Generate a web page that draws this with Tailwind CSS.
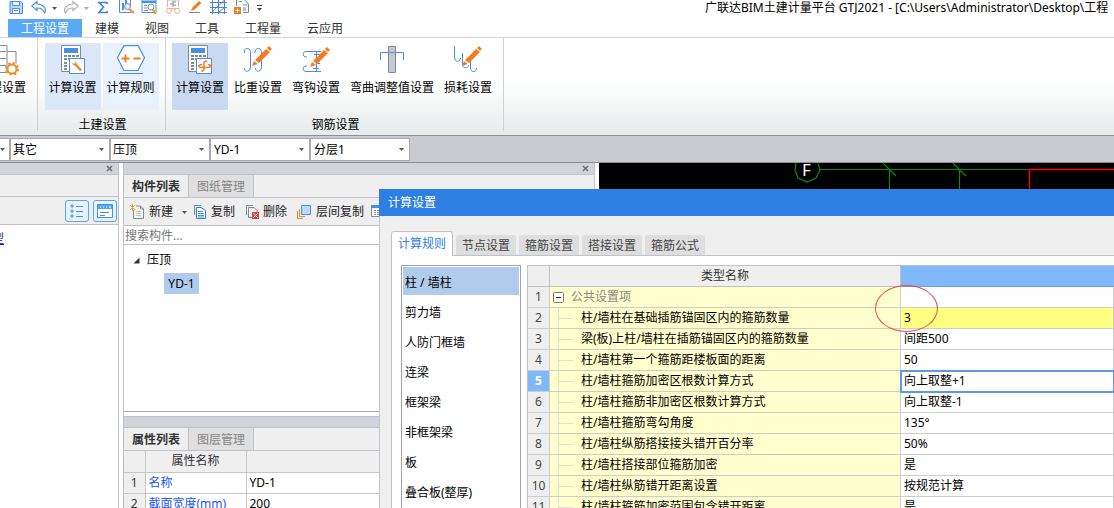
<!DOCTYPE html>
<html lang="zh-CN">
<head>
<meta charset="utf-8">
<title>广联达BIM土建计量平台 GTJ2021</title>
<script src="https://cdn.jsdelivr.net/npm/@tailwindcss/browser@4"></script>
</head>
<body class="relative flex h-screen flex-col overflow-hidden bg-white font-['Noto_Sans','Noto_Sans_CJK_SC',sans-serif] text-xs text-black">

<svg class="hidden" aria-hidden="true">
  <symbol id="calc" viewBox="0 0 24 30">
    <path d="M.5 .5h19v26H.5z" fill="#fff" stroke="#7d8c96"/>
    <path d="M3 3h14v5H3z" fill="#4a90e2"/>
    <path d="M3 10h3v2H3zM7 10h3v2H7zM11 10h3v2h-3zM15 10h3v2h-3zM3 13h3v2H3zM7 13h3v2H7zM3 17h3v2H3zM3 20h3v2H3zM3 23h3v2H3z" fill="#7d8c96"/>
  </symbol>
  <symbol id="pencil" viewBox="0 0 22 22">
    <path d="M4 15 15 4l4 3L8 18zM16 3l2-2 3 3-2 2zM3 16l4 3-6 2z" fill="#f47c20"/>
  </symbol>
  <symbol id="caret" viewBox="0 0 5 3"><path d="M0 0h5L2.500 3z" fill="currentColor"/></symbol>
  <symbol id="close" viewBox="0 0 7 7"><path d="M1 1l5 5M6 1 1 6" stroke="#6f6f74" stroke-width="1.600"/></symbol>
</svg>

<header class="flex h-[15px] shrink-0 justify-between">
  <nav aria-label="快速访问" class="flex pl-[9px]">
    <button aria-label="保存" class="w-[22px]"><svg width="15" height="15" viewBox="0 0 15 15"><path d="M1 1.500h11l1.500 1.500v10.500H1z" fill="#b9d8fa" stroke="#4a90e2"/><path d="M3.500 1.500h7v4h-7zM3.500 8.500h7v5h-7z" fill="#fff" stroke="#4a90e2"/><path d="M5 10.500h4" stroke="#4a90e2"/></svg></button>
    <button aria-label="撤销" class="w-[21px]"><svg width="16" height="15" viewBox="0 0 16 15"><path d="M.8 6 6 1.500V4c5 0 8.500 3 8.500 6.500 0 1-.5 2-1 2.500-1-3-3-5-7.500-5v2.500z" fill="#fff" stroke="#4a90e2" stroke-width="1.200"/></svg></button>
    <button aria-label="撤销列表" class="w-[11px] text-[#555]"><svg class="mt-px" width="5" height="3"><use href="#caret"/></svg></button>
    <button aria-label="恢复" class="w-[21px]"><svg width="16" height="15" viewBox="0 0 16 15"><path d="M15.200 6 10 1.500V4C5 4 1.500 7 1.500 10.500c0 1 .5 2 1 2.500 1-3 3-5 7.500-5v2.500z" fill="#fff" stroke="#b0b0b0" stroke-width="1.200"/></svg></button>
    <button aria-label="恢复列表" class="w-[13px] text-[#aaa]"><svg class="mt-px" width="5" height="3"><use href="#caret"/></svg></button>
    <button aria-label="汇总计算" class="w-[21px]"><svg width="12" height="15" viewBox="0 0 12 15"><path d="M10 4V2.500H2L6.500 7 2 12.500h8V11" fill="none" stroke="#3e83d6" stroke-width="1.600"/></svg></button>
    <button aria-label="查看计算式" class="w-[23px]"><svg width="17" height="15" viewBox="0 0 17 15"><path d="M1.500 0v12.500h14M12.500 0v7" fill="none" stroke="#4a90e2"/><path d="M4 3h2v7H4zM7 0h2v5H7z" fill="#4a90e2"/><circle cx="9.500" cy="6.500" r="3" fill="#d9ebff" stroke="#7d8c96"/><path d="m11 9 5 4" stroke="#f2995c" stroke-width="2.500"/></svg></button>
    <button aria-label="查看工程量" class="w-6"><svg width="17" height="15" viewBox="0 0 17 15"><path d="M1 0h14v12.500H1z" fill="#fff" stroke="#4a90e2"/><path d="M1 1h14v2H1z" fill="#4a90e2"/><path d="M3 5.500h3M3 8h3M3 10.500h4" stroke="#7d8c96"/><circle cx="10" cy="7" r="3" fill="#fff" stroke="#7d8c96"/><path d="m12 10 3 4" stroke="#f0a030" stroke-width="2.500"/></svg></button>
    <button aria-label="查看钢筋量" class="w-[23px]"><svg width="16" height="15" viewBox="0 0 16 15"><path d="M2.500 7V0h11v7" fill="none" stroke="#b8c0c8"/><path d="M5 4h3M8 1v6M8 2h3M8 5h3" stroke="#7d8c96"/><path d="M1 8h14l-2 2h-3L8 9l-2 1H3z" fill="#f6b48a"/><circle cx="4" cy="11" r="2.500" fill="#fff" stroke="#f6b48a"/><circle cx="12" cy="11" r="2.500" fill="#fff" stroke="#f6b48a"/></svg></button>
    <button aria-label="绘图" class="w-[22px]"><svg width="15" height="15" viewBox="0 0 15 15"><path d="M4 8 11 1l2.500 2L6 10l-3 .5z" fill="#f47c20"/><path d="M1 12.500h11" stroke="#7d8c96"/></svg></button>
    <button aria-label="轴网" class="w-6"><svg width="17" height="15" viewBox="0 0 17 15"><path d="M2.500 0v14M8.500 0v14M14.500 0v14M0 2.500h17M0 7.500h17M0 12.500h17M1 13 14.500 0M8 13l7-6" fill="none" stroke="#4a83cc"/></svg></button>
    <button aria-label="添加图纸" class="w-[22px]"><svg width="16" height="15" viewBox="0 0 16 15"><path d="M2.500 6V0M5 1.500h3M9 12.500h5.500V4l-4-4" fill="none" stroke="#7d8c96"/><path d="M0 7h7v7H0z" fill="#f47c20"/><path d="M1.500 10.500h4M3.500 8.500v4" stroke="#fff"/><path d="M9 5h4M9 8h3M9 10h3" stroke="#4a90e2"/></svg></button>
    <button aria-label="自定义快速访问" class="w-[9px] text-[#444]"><svg width="7" height="15" viewBox="0 0 7 15"><path d="M1 5.500h5" stroke="currentColor"/><path d="M1 8h5L3.500 11z" fill="currentColor"/></svg></button>
  </nav>
  <h1 class="w-[409px] overflow-hidden leading-[15px] whitespace-nowrap">广联达BIM土建计量平台 GTJ2021 - [C:\Users\Administrator\Desktop\工程</h1>
</header>

<nav aria-label="功能区" class="flex h-[23px] shrink-0 border-b border-[#d5d5d5] pt-1 pl-2 leading-4 text-[#333]">
  <button class="bg-[#5aa9f8] px-[13px] pt-[2px] text-white">工程设置</button>
  <button class="px-[13px] pt-[2px]">建模</button>
  <button class="px-[13px] pt-[2px]">视图</button>
  <button class="px-[13px] pt-[2px]">工具</button>
  <button class="px-[13px] pt-[2px]">工程量</button>
  <button class="px-[13px] pt-[2px]">云应用</button>
</nav>

<section aria-label="工程设置" class="flex h-[98px] shrink-0 border-b border-[#8d9094] bg-linear-to-b from-white from-45% to-[#e7ebeb] pb-1 whitespace-nowrap">
  <div class="flex w-[38px] justify-end overflow-hidden border-r border-[#cfd1d3] pt-[5px] pr-[11px]">
    <button class="flex h-[67px] flex-col items-end pt-[2px]">
      <svg width="36" height="30" viewBox="0 0 36 30"><path d="M8 .5h9v27H8M8 6.500h8M8 13.500h8M8 20.500h8M17 6.500h9v12" fill="#fff" stroke="#7d8c96"/><circle cx="22" cy="24" r="4.500" fill="#fff" stroke="#ee9130" stroke-width="2"/><circle cx="22" cy="24" r="6" fill="none" stroke="#ee9130" stroke-width="2" stroke-dasharray="2.500 2.200"/></svg>
      <span class="mt-1 leading-[18px]">工程设置</span>
    </button>
  </div>
  <div class="flex w-32 flex-col items-center border-r border-[#cfd1d3] pt-[5px]">
    <div class="flex gap-[2px]">
      <button class="flex h-[67px] w-14 flex-col items-center bg-[#dce8f9] pt-[2px]">
        <svg width="24" height="30"><use href="#calc" width="24" height="30"/><path d="M8.500 13.500h15v15h-15z" fill="#fff" stroke="#4a90e2"/><path d="m14 19 6 6.500" stroke="#f0882e" stroke-width="2.500"/><path d="M11 17.500c0 2 2 3 3.500 2.500 1.500-1 1.500-3 0-4v2l-1.500 1z" fill="#f0882e"/></svg>
        <span class="mt-1 leading-[18px]">计算设置</span>
      </button>
      <button class="flex h-[67px] w-14 flex-col items-center bg-[#e9f1fc] pt-[2px]">
        <svg width="30" height="30" viewBox="0 0 30 30"><path d="M8 .7h14l6.500 12L22 25.500H8L1.500 12.700z" fill="#fff" stroke="#4a90e2" stroke-width="1.200"/><path d="M3 28.500h24" stroke="#4a90e2"/><path d="M5.500 13.500h8M9.500 9.500v8M17.500 13.500h7" stroke="#f47c20" stroke-width="1.800"/></svg>
        <span class="mt-1 leading-[18px]">计算规则</span>
      </button>
    </div>
    <h2 class="mt-[6px] pl-[2px] leading-[18px]">土建设置</h2>
  </div>
  <div class="flex flex-col items-center border-r border-[#cfd1d3] pt-[5px] pr-[7px] pl-[6px]">
    <div class="flex gap-[2px]">
      <button class="flex h-[67px] w-14 flex-col items-center bg-[#c9d9f0] pt-[2px]">
        <svg width="24" height="30"><use href="#calc" width="24" height="30"/><path d="M8.500 13.500h15v15h-15z" fill="#fff" stroke="#4a90e2"/><path d="M19 17c-1-1.500-3-1-3 1v6c0 2-1.500 2.500-3 1.500M14 19.500c-4 0-4 3-1 3h7c3 0 3-3 0-3" fill="none" stroke="#f47c20" stroke-width="1.500"/></svg>
        <span class="mt-1 leading-[18px]">计算设置</span>
      </button>
      <button class="flex h-[67px] w-14 flex-col items-center pt-[2px]">
        <svg width="30" height="30"><path d="M1.500 8C1 5 2 3.500 4.500 3.500S7.500 6 7.500 8v14c0 5-6 6-6 1M12 8c0-3 1-4.500 3.500-4.500S18.500 6 18.500 8v14c0 5-6 6-6 1" fill="none" stroke="#4a90e2"/><use href="#pencil" x="8" y="0" width="22" height="22"/></svg>
        <span class="mt-1 leading-[18px]">比重设置</span>
      </button>
      <button class="flex h-[67px] w-14 flex-col items-center pt-[2px]">
        <svg width="30" height="30"><path d="M20 6.500H5c-4 0-4 6 1 5.500M20 26.500H5c-4 0-4-6 1-5.500M15.500 6v21M13 9.500h6M12 23.500h6M15 18.500h4" fill="none" stroke="#4a90e2"/><use href="#pencil" x="8" y="1" width="22" height="22"/></svg>
        <span class="mt-1 leading-[18px]">弯钩设置</span>
      </button>
      <button class="flex h-[67px] w-[92px] flex-col items-center pt-[2px]">
        <svg width="26" height="30" viewBox="0 0 26 30"><path d="M9.500 1.500h7v26h-7z" fill="#c5c9cd" stroke="#7d8c96"/><path d="M1.500 15V7.500h23V15" fill="none" stroke="#4a90e2"/></svg>
        <span class="mt-1 leading-[18px]">弯曲调整值设置</span>
      </button>
      <button class="flex h-[67px] w-14 flex-col items-center pt-[2px]">
        <svg width="30" height="30"><path d="M1.500 1v11c0 6 6 5 6 1M9.500 8v11c0 5 6 5 6 1M17.500 15v7c0 6 6 6 6 1" fill="none" stroke="#4a90e2"/><use href="#pencil" x="8" y="0" width="22" height="22"/></svg>
        <span class="mt-1 leading-[18px]">损耗设置</span>
      </button>
    </div>
    <h2 class="mt-[6px] pl-[3px] leading-[18px]">钢筋设置</h2>
  </div>
</section>

<div class="flex h-[27px] shrink-0 border-b border-[#8b8b90] bg-[#c9cbd0] pt-[2px] pb-px">
  <label class="relative flex w-[10px] items-center border border-l-0 border-[#a9a9ac] bg-white text-[#555]"><select aria-label="楼层" class="size-full appearance-none"></select><svg class="pointer-events-none absolute right-1" width="5" height="3"><use href="#caret"/></svg></label>
  <label class="relative flex w-[100px] items-center border border-[#a9a9ac] bg-white text-[#555]"><select aria-label="构件类别" class="size-full appearance-none pl-[2px] text-black"><option>其它</option></select><svg class="pointer-events-none absolute right-[5px]" width="5" height="3"><use href="#caret"/></svg></label>
  <label class="relative flex w-[100px] items-center border border-[#a9a9ac] bg-white text-[#555]"><select aria-label="构件类型" class="size-full appearance-none pl-[2px] text-black"><option>压顶</option></select><svg class="pointer-events-none absolute right-[5px]" width="5" height="3"><use href="#caret"/></svg></label>
  <label class="relative flex w-[100px] items-center border border-[#a9a9ac] bg-white text-[#555]"><select aria-label="构件" class="size-full appearance-none pl-[3px] text-black"><option>YD-1</option></select><svg class="pointer-events-none absolute right-[5px]" width="5" height="3"><use href="#caret"/></svg></label>
  <label class="relative flex w-[100px] items-center border border-[#a9a9ac] bg-white text-[#555]"><select aria-label="分层" class="size-full appearance-none pl-[3px] text-black"><option>分层1</option></select><svg class="pointer-events-none absolute right-[5px]" width="5" height="3"><use href="#caret"/></svg></label>
</div>

<main class="flex min-h-0 flex-1">
  <aside class="flex w-[119px] shrink-0 flex-col border-r border-[#bfc2ca]">
    <div class="flex h-3 items-center justify-end border-b border-[#bfc2ca] bg-[#d3d4da] pr-[5px]"><button aria-label="关闭" class="flex"><svg width="7" height="7"><use href="#close"/></svg></button></div>
    <div class="h-[22px] border-b border-[#bfc2ca] bg-[#efefef]"></div>
    <div class="flex h-7 items-center justify-end gap-1 border-b border-[#bfc2ca] bg-[#efefef] pr-px">
      <button aria-label="列表视图" class="flex h-[22px] w-6 items-center justify-center rounded-[3px] border border-[#56a5f2] bg-[#e8f3ff]"><svg width="14" height="14" viewBox="0 0 14 14"><path d="M1 1h2v2H1zM1 6h2v2H1zM1 11h2v2H1z" fill="none" stroke="#4a90e2"/><path d="M6 2.500h7M6 7.500h7M6 12.500h7" stroke="#4a90e2"/></svg></button>
      <button aria-label="详情视图" class="flex h-[22px] w-6 items-center justify-center rounded-[3px] border border-[#56a5f2] bg-[#e8f3ff]"><svg width="16" height="14" viewBox="0 0 16 14"><path d="M.5 .5h15v13H.5z" fill="#fff" stroke="#4a90e2"/><path d="M1 1h14v4H1z" fill="#56a5f2"/><path d="M3 3h1M6 3h1M9 3h1M12 3h2" stroke="#fff"/><path d="M3 8.500h9M3 11.500h5" stroke="#4a90e2"/></svg></button>
    </div>
    <div class="flex flex-1"><div class="flex w-1 justify-end overflow-hidden pt-[6px] text-[#17178a]"><span class="underline">型</span></div></div>
  </aside>

  <section class="ml-1 flex w-[472px] shrink-0 flex-col border-r border-l border-[#bfc2ca]">
    <div class="flex h-3 shrink-0 items-center justify-end border-b border-[#bfc2ca] bg-[#d3d4da] pr-[5px]"><button aria-label="关闭" class="flex"><svg width="7" height="7"><use href="#close"/></svg></button></div>
    <div class="flex h-[23px] shrink-0 border-b border-[#bfc2ca] bg-[#efefef] leading-5">
      <button class="w-[65px] border-r border-[#bfc2ca] pt-[2px] font-bold text-[#333]">构件列表</button>
      <button class="w-[65px] border-r border-[#bfc2ca] bg-[#dfdfdf] pt-[2px] text-[#858585]">图纸管理</button>
    </div>
    <div class="flex h-7 shrink-0 items-center border-b border-[#bfc2ca] bg-[#efefef] pt-px pl-[6px] text-[#222]">
      <button class="flex w-[44px] shrink-0 items-center gap-1 whitespace-nowrap"><svg class="shrink-0" width="15" height="16" viewBox="0 0 15 16"><path d="M3.500 6v8.500h10V5l-3-3H6M10.500 2v3h3" fill="#f7f7f7" stroke="#7d8c96"/><path d="M6 7.500h5M6 9.500h5M6 11.500h5" stroke="#b8bec4"/><path d="m0 1 5 5M5 1 0 6M2.500 0v7" stroke="#f0a030"/></svg><span>新建</span></button>
      <button aria-label="新建选项" class="flex w-[19px] shrink-0 justify-center pl-px text-[#555]"><svg width="5" height="3"><use href="#caret"/></svg></button>
      <button class="flex w-[52px] shrink-0 items-center gap-1 whitespace-nowrap"><svg width="14" height="16" viewBox="0 0 14 16"><path d="M1.500 11V1.500H8" fill="none" stroke="#4a90e2"/><path d="M3.500 13V3.500H8l4.500 3v8h-9z" fill="#fff" stroke="#3b7dc8"/><path d="M5 7.500h5M5 9.500h6M5 11.500h6M5 13h6" stroke="#4a90e2"/></svg><span>复制</span></button>
      <button class="flex w-[52px] shrink-0 items-center gap-1 whitespace-nowrap"><svg width="14" height="16" viewBox="0 0 14 16"><path d="M1.500 11V1.500H8M7 13.500H3.500v-10H9l3 3V8" fill="none" stroke="#7d8c96"/><path d="M7 8h7v7H7z" fill="#d64545"/><path d="m8.500 9.500 4 4M12.500 9.500l-4 4" stroke="#fff"/></svg><span>删除</span></button>
      <button class="flex w-[74px] shrink-0 items-center gap-[5px] whitespace-nowrap"><svg width="14" height="16" viewBox="0 0 14 16"><path d="M4.500 1.500h9v9h-9z" fill="#b9d8fa" stroke="#4a90e2"/><path d="M2.500 5v7.500H8M.5 7v7.500H6" fill="none" stroke="#f0882e"/></svg><span>层间复制</span></button>
      <button aria-label="表格" class="flex"><svg width="12" height="14" viewBox="0 0 12 14"><path d="M.5 .5h12v11H.5z" fill="#fff" stroke="#7d8c96"/><path d="M0 0h12v3H0z" fill="#4a90e2"/><path d="M3 5.500h5M3 7.500h5M3 9.500h5" stroke="#7d8c96" stroke-dasharray="2 1"/></svg></button>
    </div>
    <input type="search" aria-label="搜索构件" placeholder="搜索构件..." class="h-[19px] shrink-0 border-b border-[#bfc2ca] bg-white pl-px placeholder:text-[#777]">
    <div role="tree" class="h-[167px] shrink-0 border-b border-[#a9a9b0] pt-[5px] leading-5">
      <div role="treeitem" class="flex items-center gap-[7px] pl-[9px]"><svg width="7" height="7" viewBox="0 0 7 7"><path d="M6.500 .5v6H.5z" fill="#333"/></svg>压顶</div>
      <div role="treeitem" class="mt-[3px] ml-10 h-[21px] w-[35px] bg-[#b1cbec] text-center leading-[21px]">YD-1</div>
    </div>
    <div class="mt-1 h-3 shrink-0 border-t border-b border-[#bfc2ca] bg-[#d3d4da]"></div>
    <div class="flex h-[23px] shrink-0 border-b border-[#bfc2ca] bg-[#efefef] leading-5">
      <button class="w-[65px] border-r border-[#bfc2ca] pt-[2px] font-bold text-[#333]">属性列表</button>
      <button class="w-[65px] border-r border-[#bfc2ca] bg-[#dfdfdf] pt-[2px] text-[#858585]">图层管理</button>
    </div>
    <table class="w-full table-fixed border-collapse leading-5 whitespace-nowrap">
      <colgroup><col class="w-[21px]"><col class="w-[101px]"><col></colgroup>
      <thead><tr class="h-[21px] bg-[#efefef] text-[#333]"><th class="border-r border-b border-[#c6c6c6] p-0"></th><th class="border-r border-b border-[#c6c6c6] p-0 font-normal">属性名称</th><th class="border-b border-[#c6c6c6] p-0 font-normal"></th></tr></thead>
      <tbody>
        <tr class="h-[21px]"><td class="border-r border-b border-[#c6c6c6] bg-[#efefef] p-0 text-center text-[#333]">1</td><td class="border-r border-b border-[#c6c6c6] p-0 pl-[3px] text-[#1a56ff]">名称</td><td class="border-b border-[#c6c6c6] p-0 pl-[3px]">YD-1</td></tr>
        <tr class="h-[21px]"><td class="border-r border-b border-[#c6c6c6] bg-[#efefef] p-0 text-center text-[#333]">2</td><td class="border-r border-b border-[#c6c6c6] p-0 pl-[3px] text-[#1a56ff]">截面宽度(mm)</td><td class="border-b border-[#c6c6c6] p-0 pl-[3px]">200</td></tr>
      </tbody>
    </table>
  </section>

  <section aria-label="绘图区" class="ml-1 min-w-0 flex-1 bg-black">
    <svg class="block" width="515" height="30">
      <path d="M197 0l-1 7 3 8 9 4 9-4 4-8-2-7M221 6.500h209M290.500 6v24M360.500 6v24M284 0l13 13M354 0l13 13" fill="none" stroke="#0a8a0a" stroke-width="1.200"/>
      <path d="M430.500 30V6.500H515" fill="none" stroke="#ff0000" stroke-width="1.400"/>
      <text x="203" y="13" fill="#fff" font-size="17">F</text>
    </svg>
  </section>
</main>

<!-- Floating settings window -->
<div role="dialog" aria-labelledby="dlg" class="absolute top-[189px] right-0 bottom-0 left-[379px] flex flex-col border-l border-[#bfc6d2] bg-[#efefef]">
  <h2 id="dlg" class="-ml-px h-[27px] shrink-0 bg-[#2d7fe3] pl-[9px] leading-[27px] text-white">计算设置</h2>
  <div class="flex min-h-0 flex-1 flex-col pt-[15px] pl-[11px]">
    <div role="tablist" class="z-10 flex h-6 shrink-0 items-end gap-[3px] leading-5 text-[#444]">
      <button role="tab" aria-selected="true" class="-mb-px h-[25px] w-[62px] shrink-0 rounded-t-[3px] border border-b-0 border-[#bfc2ca] bg-white text-[#2d7fe3]">计算规则</button>
      <button role="tab" class="h-5 w-[60px] rounded-t-[3px] bg-[#dedede] pt-px">节点设置</button>
      <button role="tab" class="h-5 w-[60px] rounded-t-[3px] bg-[#dedede] pt-px">箍筋设置</button>
      <button role="tab" class="h-5 w-[60px] rounded-t-[3px] bg-[#dedede] pt-px">搭接设置</button>
      <button role="tab" class="h-5 w-[60px] rounded-t-[3px] bg-[#dedede] pt-px">箍筋公式</button>
    </div>
    <div class="flex min-h-0 flex-1 gap-[6px] overflow-hidden border-t border-l border-[#bfc2ca] bg-white pt-[9px] pl-[9px]">
      <div role="listbox" aria-label="构件" class="flex w-[120px] shrink-0 flex-col border border-b-0 border-[#a2a2a6] p-px leading-6">
        <button role="option" aria-selected="true" class="mb-[2px] h-7 shrink-0 bg-[#b1cbec] pt-[3px] pl-[2px] text-left">柱 / 墙柱</button>
        <button role="option" class="mb-[2px] h-7 shrink-0 pt-[3px] pl-[2px] text-left">剪力墙</button>
        <button role="option" class="mb-[2px] h-7 shrink-0 pt-[3px] pl-[2px] text-left">人防门框墙</button>
        <button role="option" class="mb-[2px] h-7 shrink-0 pt-[3px] pl-[2px] text-left">连梁</button>
        <button role="option" class="mb-[2px] h-7 shrink-0 pt-[3px] pl-[2px] text-left">框架梁</button>
        <button role="option" class="mb-[2px] h-7 shrink-0 pt-[3px] pl-[2px] text-left">非框架梁</button>
        <button role="option" class="mb-[2px] h-7 shrink-0 pt-[3px] pl-[2px] text-left">板</button>
        <button role="option" class="mb-[2px] h-7 shrink-0 pt-[3px] pl-[2px] text-left">叠合板(整厚)</button>
      </div>
      <div class="relative min-w-0 flex-1">
        <table class="w-full table-fixed border-separate border-spacing-0 border-t border-l border-[#c2c2c2] leading-5 whitespace-nowrap [&_td]:border-r [&_td]:border-b [&_td]:border-[#cdcdcd] [&_td]:p-0 [&_td:first-child]:bg-[#efefef] [&_td:first-child]:text-center [&_td:first-child]:text-[#444] [&_td:nth-child(2)]:bg-[#ffffce] [&_td:nth-child(3)]:pl-[3px] [&_tr]:h-[21px]">
          <colgroup><col class="w-[22px]"><col class="w-[351px]"><col></colgroup>
          <thead><tr class="bg-[#efefef] text-[#333]"><th class="border-r border-b border-[#c2c2c2] p-0"></th><th class="border-r border-b border-[#c2c2c2] p-0 font-normal">类型名称</th><th class="border-b border-[#6a9fe0] bg-[#80b9fb] p-0"></th></tr></thead>
          <tbody id="rules">
            <tr><td>1</td><td><div class="flex items-center gap-[7px] pl-[3px] text-[#888]"><button aria-label="折叠" class="flex"><svg width="11" height="11" viewBox="0 0 11 11"><rect x=".5" y=".5" width="10" height="10" rx="1" fill="#fff" stroke="#777"/><path d="M3 5.500h5" stroke="#222"/></svg></button>公共设置项</div></td><td></td></tr>
            <tr><td>2</td><td><div class="ml-2 flex items-center gap-2 border-l border-[#e0e0da]"><i class="h-px w-[14px] bg-[#e0e0da]"></i>柱/墙柱在基础插筋锚固区内的箍筋数量</div></td><td class="bg-[#ffff80]">3</td></tr>
            <tr><td>3</td><td><div class="ml-2 flex items-center gap-2 border-l border-[#e0e0da]"><i class="h-px w-[14px] bg-[#e0e0da]"></i>梁(板)上柱/墙柱在插筋锚固区内的箍筋数量</div></td><td>间距500</td></tr>
            <tr><td>4</td><td><div class="ml-2 flex items-center gap-2 border-l border-[#e0e0da]"><i class="h-px w-[14px] bg-[#e0e0da]"></i>柱/墙柱第一个箍筋距楼板面的距离</div></td><td>50</td></tr>
            <tr><td class="bg-[#80b9fb]! font-bold text-white!">5</td><td><div class="ml-2 flex items-center gap-2 border-l border-[#e0e0da]"><i class="h-px w-[14px] bg-[#e0e0da]"></i>柱/墙柱箍筋加密区根数计算方式</div></td><td class="outline-2 -outline-offset-1 outline-[#5a9ae6]">向上取整+1</td></tr>
            <tr><td>6</td><td><div class="ml-2 flex items-center gap-2 border-l border-[#e0e0da]"><i class="h-px w-[14px] bg-[#e0e0da]"></i>柱/墙柱箍筋非加密区根数计算方式</div></td><td>向上取整-1</td></tr>
            <tr><td>7</td><td><div class="ml-2 flex items-center gap-2 border-l border-[#e0e0da]"><i class="h-px w-[14px] bg-[#e0e0da]"></i>柱/墙柱箍筋弯勾角度</div></td><td>135°</td></tr>
            <tr><td>8</td><td><div class="ml-2 flex items-center gap-2 border-l border-[#e0e0da]"><i class="h-px w-[14px] bg-[#e0e0da]"></i>柱/墙柱纵筋搭接接头错开百分率</div></td><td>50%</td></tr>
            <tr><td>9</td><td><div class="ml-2 flex items-center gap-2 border-l border-[#e0e0da]"><i class="h-px w-[14px] bg-[#e0e0da]"></i>柱/墙柱搭接部位箍筋加密</div></td><td>是</td></tr>
            <tr><td>10</td><td><div class="ml-2 flex items-center gap-2 border-l border-[#e0e0da]"><i class="h-px w-[14px] bg-[#e0e0da]"></i>柱/墙柱纵筋错开距离设置</div></td><td>按规范计算</td></tr>
            <tr><td>11</td><td><div class="ml-2 flex items-center gap-2 border-l border-[#e0e0da]"><i class="h-px w-[14px] bg-[#e0e0da]"></i>柱/墙柱箍筋加密范围包含错开距离</div></td><td>是</td></tr>
          </tbody>
        </table>
        <div class="absolute top-5 left-[348px] h-[47px] w-[63px] rounded-[50%] border border-[#f04848]"></div>
      </div>
    </div>
  </div>
</div>
</body>
</html>
